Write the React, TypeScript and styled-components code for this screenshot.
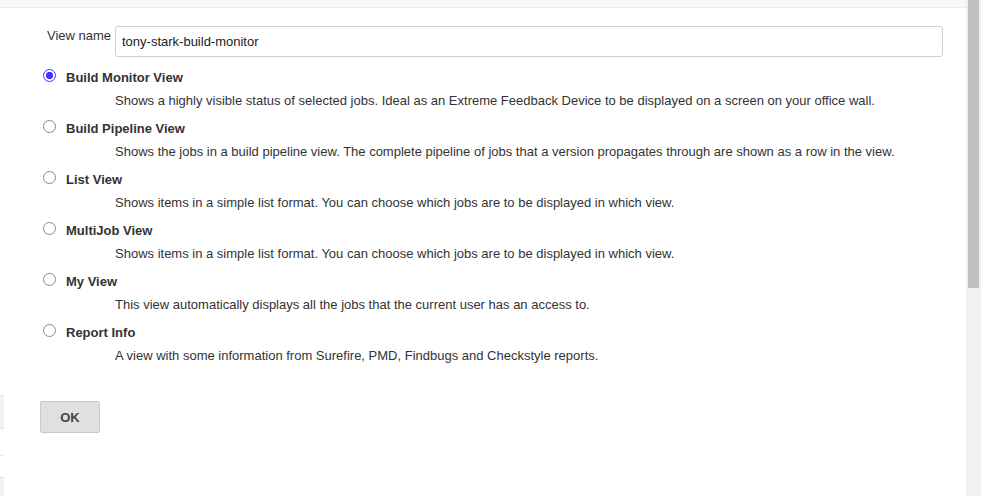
import { useState } from "react";
import styled, { createGlobalStyle } from "styled-components";

const GlobalStyle = createGlobalStyle`
  html, body {
    margin: 0;
    padding: 0;
    background: #fff;
    overflow: hidden;
  }

  body {
    font-family: "Liberation Sans", Arial, sans-serif;
    font-size: 13px;
    color: #333;
  }
`;

const Page = styled.div`
  height: 100vh;
  display: flex;
`;

const Viewport = styled.div`
  flex: 1;
  display: flex;
  flex-direction: column;
  overflow: hidden;
`;

const ScrollTrack = styled.div`
  width: 15px;
  flex: none;
  background: #f1f1f1;
  border-left: 1px solid #ececec;
  box-sizing: border-box;
  padding: 0 2px 0 1px;
`;

const ScrollThumb = styled.div<{ $size: number }>`
  height: ${p => p.$size}px;
  background: #c1c1c1;
`;

const TopBand = styled.div`
  height: 7px;
  flex: none;
  background: #f8f8f8;
  border-bottom: 1px solid #ebebeb;
`;

const Body = styled.div`
  display: flex;
  flex: 1;
`;

const Rail = styled.div`
  width: 4px;
  flex: none;
  overflow: hidden;
  padding-top: 387px;
  display: flex;
  flex-direction: column;
  gap: 21px;
`;

const RailPanel = styled.div<{ $head: number; $body: number }>`
  width: 200px;
  margin-left: -196px;
  border: 1px solid #e2e2e2;
  border-radius: 4px;
  overflow: hidden;
  background: #fff;

  &::before {
    content: "";
    display: block;
    height: ${p => p.$head}px;
    background: #f2f2f2;
    border-bottom: 1px solid #e4e4e4;
  }

  &::after {
    content: "";
    display: block;
    height: ${p => p.$body}px;
  }
`;

const Main = styled.main`
  flex: 1;
  padding: 18px 23px 0 39px;
`;

const NameRow = styled.div`
  display: flex;
  align-items: flex-start;
`;

const NameLabel = styled.label`
  width: 68px;
  padding: 2px 0 0 4px;
  line-height: 15px;
`;

const NameInput = styled.input`
  flex: 1;
  height: 31px;
  box-sizing: border-box;
  border: 1px solid #cfcfcf;
  border-radius: 3px;
  padding: 0 6px;
  font-family: "Liberation Sans", Arial, sans-serif;
  font-size: 13px;
  color: #222;
  outline: none;
`;

const OptionList = styled.div`
  display: flex;
  flex-direction: column;
  gap: 9px;
  margin-top: 11px;
`;

const Option = styled.div`
  display: flex;
  flex-direction: column;
  gap: 4px;
`;

const OptionHead = styled.label`
  display: flex;
  align-items: flex-start;
  gap: 10px;
  height: 20px;
  line-height: 20px;
  font-weight: bold;
  cursor: pointer;
`;

const Radio = styled.input.attrs({ type: "radio" })`
  appearance: none;
  width: 13px;
  height: 13px;
  margin: 1px 0 0 0;
  border-radius: 50%;
  border: 1px solid #8a8a8a;
  background: #fff;
  box-sizing: border-box;
  flex: none;

  &:checked {
    border-color: #4634f6;
    background: radial-gradient(circle, #4634f6 0 3.4px, #fff 3.9px);
  }
`;

const Description = styled.div`
  padding-left: 72px;
  line-height: 18px;
`;

const OkButton = styled.button`
  margin: 36px 0 0 -3px;
  width: 60px;
  height: 32px;
  background: #e0e0e0;
  border: 1px solid #c9c9c9;
  border-radius: 2px;
  font-family: "Liberation Sans", Arial, sans-serif;
  font-size: 13px;
  font-weight: bold;
  color: #444;
  cursor: pointer;
`;

const views = [
  {
    id: "build-monitor",
    name: "Build Monitor View",
    description:
      "Shows a highly visible status of selected jobs. Ideal as an Extreme Feedback Device to be displayed on a screen on your office wall.",
  },
  {
    id: "build-pipeline",
    name: "Build Pipeline View",
    description:
      "Shows the jobs in a build pipeline view. The complete pipeline of jobs that a version propagates through are shown as a row in the view.",
  },
  {
    id: "list",
    name: "List View",
    description: "Shows items in a simple list format. You can choose which jobs are to be displayed in which view.",
  },
  {
    id: "multijob",
    name: "MultiJob View",
    description: "Shows items in a simple list format. You can choose which jobs are to be displayed in which view.",
  },
  {
    id: "my",
    name: "My View",
    description: "This view automatically displays all the jobs that the current user has an access to.",
  },
  {
    id: "report-info",
    name: "Report Info",
    description: "A view with some information from Surefire, PMD, Findbugs and Checkstyle reports.",
  },
];

const App = () => {
  const [name, setName] = useState("tony-stark-build-monitor");
  const [mode, setMode] = useState("build-monitor");

  return (
    <>
      <GlobalStyle />
      <Page>
        <Viewport>
          <TopBand />
          <Body>
            <Rail>
              <RailPanel $head={32} $body={26} />
              <RailPanel $head={32} $body={60} />
            </Rail>
            <Main>
              <NameRow>
                <NameLabel htmlFor="view-name">View name</NameLabel>
                <NameInput id="view-name" value={name} onChange={e => setName(e.target.value)} />
              </NameRow>
              <OptionList>
                {views.map(v => (
                  <Option key={v.id}>
                    <OptionHead>
                      <Radio name="mode" checked={mode === v.id} onChange={() => setMode(v.id)} />
                      {v.name}
                    </OptionHead>
                    <Description>{v.description}</Description>
                  </Option>
                ))}
              </OptionList>
              <OkButton type="button">OK</OkButton>
            </Main>
          </Body>
        </Viewport>
        <ScrollTrack>
          <ScrollThumb $size={288} />
        </ScrollTrack>
      </Page>
    </>
  );
};

export default App;
